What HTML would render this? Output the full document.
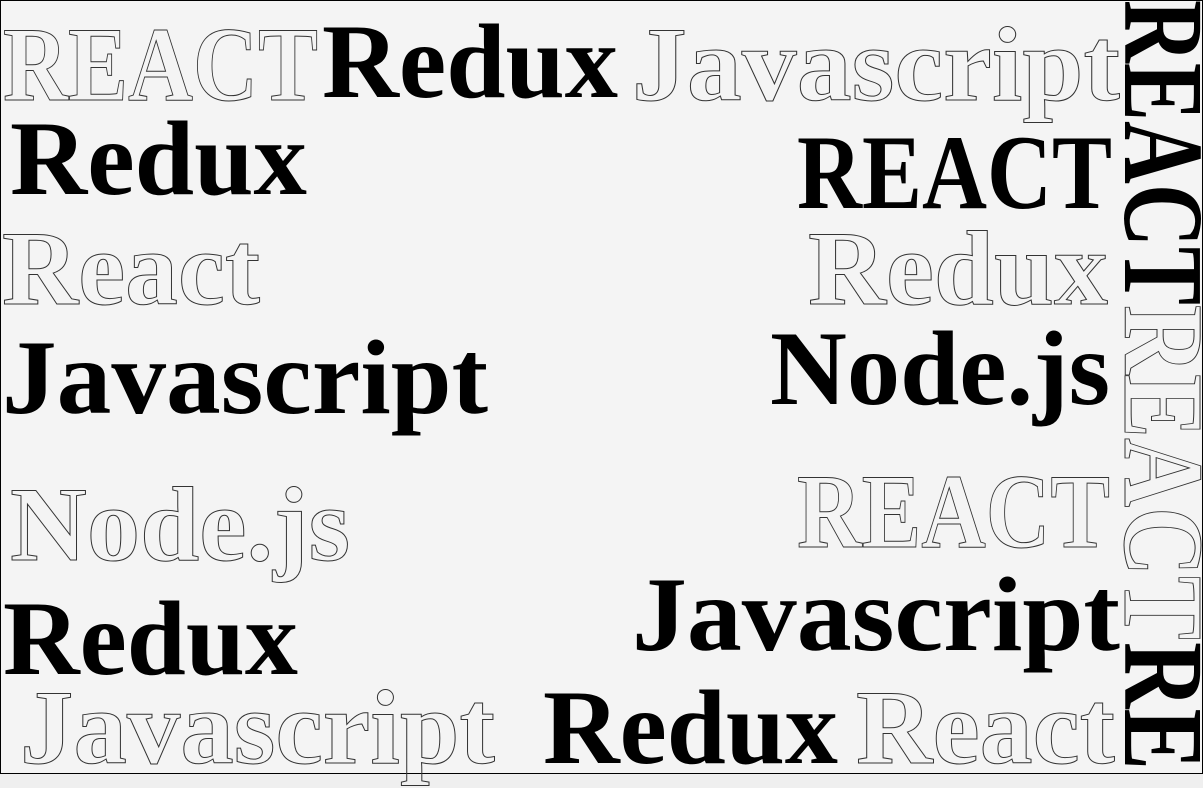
<!DOCTYPE html>
<html><head><meta charset="utf-8"><style>
html,body{margin:0;padding:0;background:#efefef;width:1203px;height:788px;overflow:hidden}
svg{display:block}
text{font-family:"Liberation Serif",serif;font-weight:bold;font-size:106px}
.o{fill:none;stroke:#333;stroke-width:1}
.b{fill:#000}
</style></head><body>
<svg width="1203" height="788" viewBox="0 0 1203 788" xmlns="http://www.w3.org/2000/svg">
<rect x="0.5" y="0.5" width="1202" height="773" fill="#f4f4f4" stroke="#000" stroke-width="1"/>
<text class="o" x="3" y="100" textLength="315" lengthAdjust="spacingAndGlyphs">REACT</text>
<text class="b" x="322" y="97" textLength="296" lengthAdjust="spacingAndGlyphs">Redux</text>
<text class="o" x="632" y="100" textLength="488" lengthAdjust="spacingAndGlyphs">Javascript</text>

<text class="b" x="10" y="194" textLength="297" lengthAdjust="spacingAndGlyphs">Redux</text>
<text class="b" x="797" y="208" textLength="315" lengthAdjust="spacingAndGlyphs">REACT</text>

<text class="o" x="2" y="304" textLength="258" lengthAdjust="spacingAndGlyphs">React</text>
<text class="o" x="808" y="304" textLength="300" lengthAdjust="spacingAndGlyphs">Redux</text>

<text class="b" x="2" y="413" textLength="486" lengthAdjust="spacingAndGlyphs">Javascript</text>
<text class="b" x="770" y="404" textLength="340" lengthAdjust="spacingAndGlyphs">Node.js</text>

<text class="o" x="10" y="560" textLength="340" lengthAdjust="spacingAndGlyphs">Node.js</text>
<text class="o" x="797" y="547" textLength="313" lengthAdjust="spacingAndGlyphs">REACT</text>

<text class="b" x="3" y="674" textLength="295" lengthAdjust="spacingAndGlyphs">Redux</text>
<text class="b" x="632" y="650" textLength="488" lengthAdjust="spacingAndGlyphs">Javascript</text>

<text class="o" x="20" y="763" textLength="475" lengthAdjust="spacingAndGlyphs">Javascript</text>
<text class="b" x="543" y="763" textLength="295" lengthAdjust="spacingAndGlyphs">Redux</text>
<text class="o" x="856" y="763" textLength="259" lengthAdjust="spacingAndGlyphs">React</text>

<g transform="translate(1125,0) rotate(90)">
<text class="b" x="0" y="0" font-size="114" style="font-size:114px" textLength="305" lengthAdjust="spacingAndGlyphs">REACT</text>
<text class="o" x="305" y="0" style="font-size:114px" textLength="335" lengthAdjust="spacingAndGlyphs">REACT</text>
<text class="b" x="642" y="0" style="font-size:114px" textLength="128" lengthAdjust="spacingAndGlyphs">RE</text>
</g>
</svg>
</body></html>
